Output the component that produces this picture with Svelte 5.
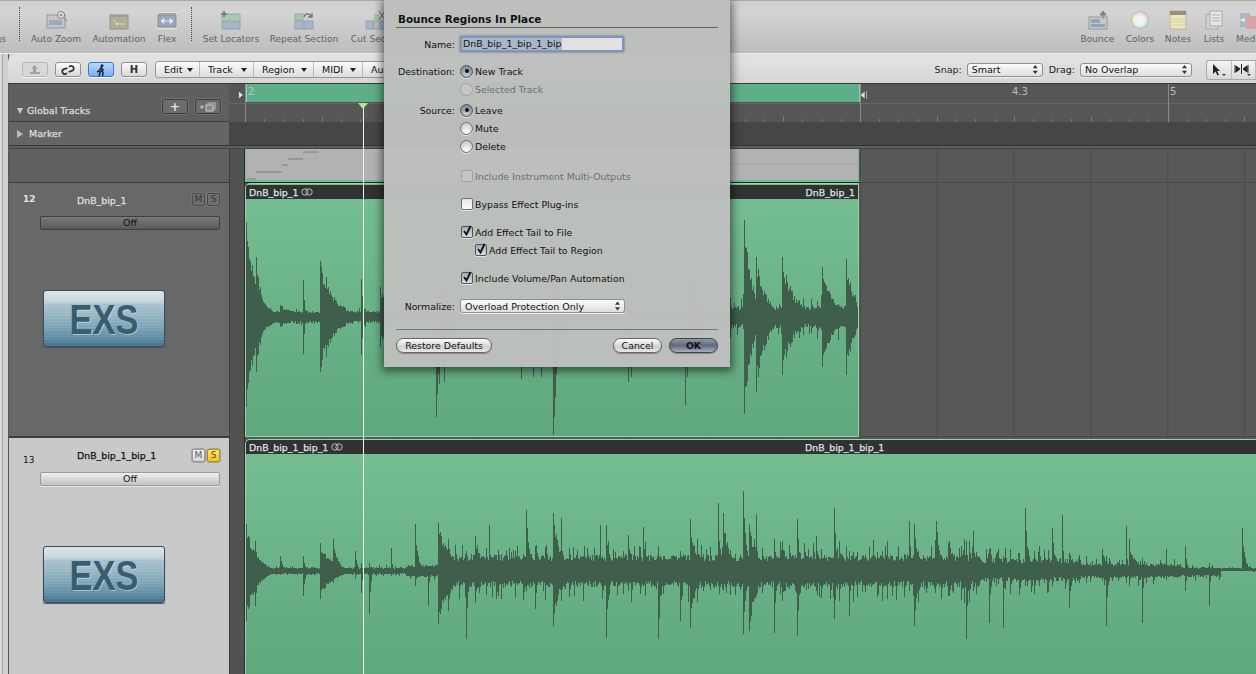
<script>
  function rng(seed) {
    let a = seed;
    return () => {
      a = (a + 0x6d2b79f5) | 0;
      let t = Math.imul(a ^ (a >>> 15), 1 | a);
      t = (t + Math.imul(t ^ (t >>> 7), 61 | t)) ^ t;
      return ((t ^ (t >>> 14)) >>> 0) / 4294967296;
    };
  }
  function wave(hits, base, from, to, cy, seed) {
    const r = rng(seed);
    let d = '';
    for (let x = from; x < to; x++) {
      const [bu, bd] = base(x);
      let u = bu * (0.75 + 0.5 * r());
      let l = bd * (0.75 + 0.5 * r());
      if (r() < 0.08) u *= 1.6;
      if (r() < 0.08) l *= 1.6;
      for (const h of hits) {
        const hx = Math.floor(h[0]);
        if (x >= hx && x - hx < h[3] * 7) {
          const k = Math.exp(-(x - hx) / h[3]);
          const j = x === hx ? 1 : 0.7 + 0.3 * r();
          u = Math.max(u, h[1] * k * j);
          l = Math.max(l, h[2] * k * j);
        }
      }
      d += `M${x - from + 0.5} ${(cy - u).toFixed(0)}V${(cy + l).toFixed(0)}`;
    }
    return d;
  }
  const z = (off, list, s = 3) => list.map((h) => [off + h[0] / s, h[1], h[2], h[3]]);
  function bursts(from, to, amp, seed) {
    const r = rng(seed);
    const out = [];
    for (let x = from; x < to; x += 3 + r() * 7) {
      const a = amp(x);
      out.push([x, a * (0.45 + r() * 0.75), a * (0.45 + r() * 0.75), 1.5 + r() * 2.5]);
    }
    return out;
  }

  const hits1 = z(240, [
    [15,95,90,10],[42,60,55,6],[60,8,10,30],[100,12,10,20],[158,37,37,1.5],[200,56,55,14],[215,40,40,10],
    [303,38,38,2],[350,30,30,8],[490,70,100,8],[510,45,65,5],[700,20,62,1.5],[730,20,60,1.5],[750,20,60,1.5],
    [780,90,118,6],[968,50,65,2],[975,40,60,1.5],[1110,60,88,2],[1115,60,60,10],[1255,97,97,8],[1285,60,75,10],
    [1350,60,58,12],[1450,50,50,12],[1510,58,58,8]
  ], 2.489).concat(bursts(730, 858, () => 20, 5));
  const hits2 = z(240, [
    [20,47,50,10],[45,30,35,3],[120,15,4,3],[190,15,25,2],[240,28,28,12],[280,32,12,5],[345,20,8,2],[365,8,22,1.5],
    [388,8,43,1.5],[455,23,5,1],[525,47,15,3],[565,5,35,1],[595,48,53,12],[625,32,40,6],[680,20,68,2],[705,35,32,6],
    [748,46,8,1],[770,8,28,2],[860,61,20,4],[885,25,38,2],[940,58,55,8],[965,53,30,1.5],[1030,10,30,1],[1080,46,10,1],
    [1100,46,67,3],[1165,36,20,3],[1210,44,15,2],[1255,10,68,3],[1320,20,50,1.5],[1350,52,57,7],[1435,68,15,1.5],
    [1450,58,20,6],[1510,80,63,3]
  ]).concat(z(746, [
    [10,47,60,8],[30,57,20,1],[85,30,62,2],[155,52,65,3],[110,30,30,5],[210,35,20,2],[265,63,48,2],[280,30,30,4],
    [310,20,45,2],[370,24,15,2],[410,20,30,1],[490,50,20,2],[505,47,55,5],[570,50,15,4],[610,30,25,6],[660,30,68,2],
    [683,40,20,2],[730,22,52,1],[772,15,57,1],[838,63,15,3],[880,25,15,2],[905,10,22,3],[918,43,10,3],[948,56,10,1],
    [970,10,37,1],[1070,22,10,6],[1080,15,55,2],[1140,45,12,1],[1150,32,12,6],[1190,8,52,1],[1260,22,4,1],[1318,25,20,2],
    [1390,8,35,1],[1490,43,0.4,3]
  ])).concat(bursts(455, 1170, (x) => (x < 980 ? 27 : x < 1080 ? 20 : 13), 17));
  const base1 = (x) => (x < 720 ? [5, 5] : [9, 9]);
  const base2 = (x) => {
    if (x > 1220) return [3, 0.4];
    if (x > 1180) return [3, 5];
    if (x > 1079) return [6, 6];
    if (x > 979) return [10, 8];
    if (x > 450) return [13, 13];
    if (x > 405) return [5, 5];
    return [3, 3];
  };
  const wave1 = wave(hits1, base1, 246, 858, 118, 11);
  const wave2raw = wave(hits2, base2, 246, 1256, 117, 29);

  const ticks = Array.from({ length: 54 }, (_, i) => 19.22 * i);

  const left = [
    { label: 'Auto Zoom', w: 60, icon: 'zoom' },
    { label: 'Automation', w: 66, icon: 'auto' },
    { label: 'Flex', w: 30, icon: 'flex' }
  ];
  const mid = [
    { label: 'Set Locators', w: 60, icon: 'loc' },
    { label: 'Repeat Section', w: 86, icon: 'rep' },
    { label: 'Cut Section', w: 60, icon: 'cut' }
  ];
  const right = [
    { label: 'Bounce', w: 39, icon: 'bounce' },
    { label: 'Colors', w: 46, icon: 'colors' },
    { label: 'Notes', w: 30, icon: 'notes' },
    { label: 'Lists', w: 42, icon: 'lists' }
  ];
  const menus = [
    { t: 'Edit', w: 44 }, { t: 'Track', w: 54 }, { t: 'Region', w: 60 }, { t: 'MIDI', w: 49 }, { t: 'Audio', w: 55 }
  ];
</script>

{#snippet icon(name)}
  <svg class="ticon" viewBox="0 0 24 20" width="24" height="20">
    {#if name === 'zoom'}
      <rect x="3" y="5" width="18" height="13" fill="#c4c4c4" stroke="#8c8c8c"/>
      <rect x="5" y="10" width="13" height="5" fill="#8ba2bb"/>
      <circle cx="17" cy="5" r="3.6" fill="#e6e6e6" stroke="#707070"/>
      <path d="M15.5 5h3M17 3.5v3M20 8l3 3" stroke="#666" fill="none"/>
    {:else if name === 'auto'}
      <rect x="3" y="5" width="18" height="14" fill="#a9a78e" stroke="#85857a"/>
      <rect x="3" y="5" width="18" height="2" fill="#8d8d80"/>
      <path d="M6 10l4 4h8" stroke="#e6e060" fill="none"/>
      <circle cx="10" cy="14" r="1.3" fill="#ece870"/>
    {:else if name === 'flex'}
      <rect x="1" y="1" width="22" height="19" rx="2" fill="#e3e3e3" stroke="#c8c8c8"/>
      <rect x="3" y="5" width="18" height="12" fill="#8aa0b8" stroke="#777"/>
      <rect x="3" y="3" width="18" height="2" fill="#9b9b9b"/>
      <path d="M6 11h12M6 11l3-2.5v5zM18 11l-3-2.5v5z" fill="#eef" stroke="#eef" stroke-width=".8"/>
    {:else if name === 'loc'}
      <rect x="3" y="4" width="18" height="7" fill="#9dc8a8" stroke="#84a68d"/>
      <rect x="3" y="12" width="18" height="7" fill="#9cb3c8" stroke="#8399ad"/>
      <path d="M5 1v6M2 4h6" stroke="#557" stroke-width="1.6"/>
    {:else if name === 'rep'}
      <rect x="3" y="11" width="8" height="8" fill="#9db3c8" stroke="#8399ad"/>
      <rect x="12" y="11" width="9" height="8" fill="#9db3c8" stroke="#8399ad"/>
      <rect x="3" y="4" width="8" height="6" fill="#9dc8a8" stroke="#84a68d"/>
      <path d="M12 7c1-4 5-4 7-1M20 3v4h-4" stroke="#555" stroke-width="1.3" fill="none"/>
    {:else if name === 'cut'}
      <rect x="1" y="11" width="7" height="8" fill="#9db3c8" stroke="#8399ad"/>
      <rect x="9" y="11" width="6" height="8" fill="#bbb" stroke="#999"/>
      <rect x="16" y="11" width="7" height="8" fill="#9db3c8" stroke="#8399ad"/>
      <rect x="9" y="4" width="6" height="6" fill="#9dc8a8"/>
      <path d="M14 1l6 9M20 1l-6 9" stroke="#555" fill="none"/>
    {:else if name === 'bounce'}
      <rect x="3" y="7" width="18" height="12" fill="#c9c9c9" stroke="#8a8a8a"/>
      <rect x="5" y="9" width="9" height="4" fill="#7f9cb8"/>
      <rect x="5" y="14" width="14" height="3" fill="#7f9cb8"/>
      <path d="M17 9V3M14 5l3-4 3 4z" fill="#5f6f7f" stroke="#5f6f7f"/>
    {:else if name === 'notes'}
      <rect x="4" y="1" width="16" height="18" fill="#f3edb9" stroke="#b8b08a"/>
      <rect x="4" y="1" width="16" height="4" fill="#8f7d6c"/>
      <path d="M4 9h16M4 12h16M4 15h16" stroke="#d8d094"/>
    {:else if name === 'lists'}
      <rect x="4" y="4" width="12" height="15" fill="#d4d4d4" stroke="#a0a0a0"/>
      <rect x="8" y="1" width="12" height="15" fill="#ececec" stroke="#a0a0a0"/>
      <path d="M10 5h8M10 8h8M10 11h8" stroke="#a8a8a8"/>
    {/if}
  </svg>
{/snippet}

{#snippet tool(t)}
  <div class="titem" style="width:{t.w}px">
    {#if t.icon === 'colors'}
      <div class="wheel"></div>
    {:else}
      {@render icon(t.icon)}
    {/if}
    <span class="tlabel">{t.label}</span>
  </div>
{/snippet}

{#snippet loop()}
  <svg class="loop" viewBox="0 0 12 8" width="12" height="8"><circle cx="4" cy="4" r="3.2" fill="none" stroke="#bbb"/><circle cx="8" cy="4" r="3.2" fill="none" stroke="#bbb"/></svg>
{/snippet}

{#snippet check()}
  <svg viewBox="0 0 12 12" width="12" height="12"><path d="M3 6l2.500 3.500L9.500 1" fill="none" stroke="#111" stroke-width="1.800"/></svg>
{/snippet}

{#snippet trackHead(cls, num, name)}
  <div class="thead {cls}">
    <div class="ttop">
      <span class="num">{num}</span>
      <span class="tname">{name}</span>
      <span class="ms">M</span>
      <span class="ms solo">S</span>
    </div>
    <div class="off">Off</div>
    <div class="exs"><span>EXS</span></div>
  </div>
{/snippet}

<div class="app">
  <header class="toolbar">
    <div class="gs"><span class="tlabel">Settings</span></div>
    <div class="sep first"></div>
    {#each left as t}{@render tool(t)}{/each}
    <div class="sep second"></div>
    {#each mid as t}{@render tool(t)}{/each}
    <div class="rightgroup">
      {#each right as t}{@render tool(t)}{/each}
      <div class="titem media">
        <svg class="ticon" viewBox="0 0 16 20" width="16" height="20">
          <rect x="0" y="3" width="10" height="14" fill="#9db3c8"/>
          <rect x="6" y="6" width="10" height="13" fill="#d89aa0"/>
          <path d="M0 10h5M5 10l-2-2v4z" stroke="#eee" fill="#eee"/>
        </svg>
        <span class="tlabel">Media</span>
      </div>
    </div>
  </header>

  <div class="body">
    <div class="strip"></div>
    <div class="panel">
      <div class="subbar">
        <div class="btn back">
          <svg viewBox="0 0 14 10" width="14" height="10"><path d="M2 9h10V7H8V4h2L6.5 0 3 4h2v3H2z" fill="#a2a2a2"/></svg>
        </div>
        <div class="btn link">
          <svg viewBox="0 0 14 10" width="14" height="10"><path d="M5 8H3.500A2.500 2.500 0 0 1 3.500 3H7M9 2h1.500A2.500 2.500 0 0 1 10.500 7H7" fill="none" stroke="#333" stroke-width="1.800" transform="rotate(-18 7 5)"/></svg>
        </div>
        <div class="btn run">
          <svg viewBox="0 0 12 12" width="12" height="12"><circle cx="7" cy="1.800" r="1.500" fill="#123"/><path d="M6 3.500L4 7l-2 1M6 3.500l2.500 3M6 6l2 2.500L7.500 12M5.500 7L4 12" stroke="#123" stroke-width="1.500" fill="none"/></svg>
        </div>
        <div class="btn hbtn">H</div>
        <div class="menus">
          {#each menus as m}
            <div class="menu" style="width:{m.w}px"><span>{m.t}</span><i></i></div>
          {/each}
        </div>
        <div class="subright">
          <span class="slabel">Snap:</span>
          <div class="sel snap"><span>Smart</span><b></b></div>
          <span class="slabel drag">Drag:</span>
          <div class="sel dragsel"><span>No Overlap</span><b></b></div>
          <div class="tools">
            <div class="toolcell">
              <svg viewBox="0 0 16 14" width="16" height="14"><path d="M2 1l0 10 2.500-2.500 2 4 1.500-.8-2-3.800H9z" fill="#222"/><path d="M11 11h4l-2 2z" fill="#333"/></svg>
            </div>
            <div class="toolcell">
              <svg viewBox="0 0 18 14" width="18" height="14"><path d="M7.500 1v10M1 2v8M6 6L2 3v6zM9 6l4-3v6zM14 2v8" fill="#222" stroke="#222"/><path d="M13 11h4l-2 2z" fill="#333"/></svg>
            </div>
          </div>
        </div>
      </div>

      <div class="row global">
        <div class="ghead">
          <i class="tri down"></i><span class="gt">Global Tracks</span>
          <div class="gbtn plus">+</div>
          <div class="gbtn plus2">
            <svg viewBox="0 0 18 10" width="18" height="10"><path d="M1 5h4M3 3v4" stroke="#ccc"/><rect x="9" y="1" width="7" height="6" fill="none" stroke="#bbb"/><rect x="7" y="3" width="7" height="6" fill="#888" stroke="#ccc"/></svg>
          </div>
        </div>
        <svg class="ruler" viewBox="0 0 1027 38" width="1027" height="38">
          <rect x="0" y="19" width="1027" height="1" fill="#666"/>
          <rect x="16" y="0" width="615" height="18" fill="#5fae8a"/>
          <rect x="16" y="0" width="2" height="18" fill="#8ecfae"/>
          <rect x="630" y="0" width="1" height="18" fill="#8ecfae"/>
          <path d="M9.500 7v8l5-4z" fill="#cdeadb" stroke="#234" stroke-width=".5"/>
          <path d="M636 7v8l-5-4z" fill="#cdeadb" stroke="#234" stroke-width=".5"/>
          <path d="M637.500 7v8" stroke="#aaa"/>
          <text x="19" y="11" class="rnum light">2</text>
          <text x="783" y="11" class="rnum">4.3</text>
          <text x="941" y="11" class="rnum">5</text>
          {#each ticks as t, i}
            <rect x={Math.round(16 + t)} y={i % 16 === 0 ? 0 : i % 4 === 0 ? 32 : 35} width="1" height={i % 16 === 0 ? 38 : i % 4 === 0 ? 6 : 3} fill={i % 16 === 0 ? '#8a8a8a' : '#7c7c7c'}/>
          {/each}
        </svg>
      </div>

      <div class="row marker">
        <div class="mhead"><i class="tri"></i><span class="gt">Marker</span></div>
        <div class="mlane"></div>
      </div>
      <div class="divider"></div>

      <div class="row stub">
        <div class="shead"></div>
        <div class="gutter"></div>
        <div class="lane">
          <div class="midi">
            <svg viewBox="0 0 612 31" width="612" height="31">
              <path d="M57 3h15M42 10h15M36 16h6M10 23h26M1 30h9" stroke="#8f8f8f" stroke-width="1.500"/>
              <path d="M612 15H480" stroke="#a5a5a5"/>
            </svg>
          </div>
        </div>
      </div>

      <div class="row t12">
        {@render trackHead('dark', '12', 'DnB_bip_1')}
        <div class="gutter"></div>
        <div class="lane">
          <div class="region r12">
            <div class="rtitle"><span>DnB_bip_1</span>{@render loop()}<em>DnB_bip_1</em></div>
            <svg class="wave" viewBox="0 0 612 237" width="612" height="237" shape-rendering="crispEdges"><path d={wave1} stroke="#3f5f4c" fill="none"/></svg>
          </div>
        </div>
      </div>

      <div class="row t13">
        {@render trackHead('lite', '13', 'DnB_bip_1_bip_1')}
        <div class="gutter"></div>
        <div class="lane">
          <div class="region r13">
            <div class="rtitle"><span>DnB_bip_1_bip_1</span>{@render loop()}<em class="ctr">DnB_bip_1_bip_1</em></div>
            <svg class="wave" viewBox="0 0 1010 219" width="1010" height="219" shape-rendering="crispEdges"><path d={wave2raw} stroke="#3f5f4c" fill="none"/></svg>
          </div>
        </div>
      </div>
    </div>
  </div>

  <div class="playhead"><i></i></div>

  <div class="dialog">
    <div class="dtitle">Bounce Regions In Place</div>
    <div class="f name"><label for="bn">Name:</label><div id="bn" class="input"><span>DnB_bip_1_bip_1_bip</span></div></div>
    <div class="f m9"><label for="d1">Destination:</label><span class="radio on" id="d1"></span><span class="lb">New Track</span></div>
    <div class="f"><span class="lab"></span><span class="radio dis"></span><span class="lb dim">Selected Track</span></div>
    <div class="f m3"><label for="s1">Source:</label><span class="radio on" id="s1"></span><span class="lb">Leave</span></div>
    <div class="f"><span class="lab"></span><span class="radio"></span><span class="lb">Mute</span></div>
    <div class="f"><span class="lab"></span><span class="radio"></span><span class="lb">Delete</span></div>
    <div class="f m12"><span class="lab"></span><span class="check dis"></span><span class="lb dim">Include Instrument Multi-Outputs</span></div>
    <div class="f m10"><span class="lab"></span><span class="check"></span><span class="lb">Bypass Effect Plug-ins</span></div>
    <div class="f m10"><span class="lab"></span><span class="check on">{@render check()}</span><span class="lb">Add Effect Tail to File</span></div>
    <div class="f nested"><span class="lab"></span><span class="check on">{@render check()}</span><span class="lb">Add Effect Tail to Region</span></div>
    <div class="f m10"><span class="lab"></span><span class="check on">{@render check()}</span><span class="lb">Include Volume/Pan Automation</span></div>
    <div class="f m10"><label for="nz">Normalize:</label><div class="sel norm" id="nz"><span>Overload Protection Only</span><b></b></div></div>
    <div class="dfoot">
      <div class="pill restore">Restore Defaults</div>
      <div class="pill cancel">Cancel</div>
      <div class="pill ok">OK</div>
    </div>
  </div>
</div>

<style>
  :global(body) { margin: 0; background: #c8c8c8; overflow: hidden; }
  .app { position: relative; width: 1256px; height: 674px; overflow: hidden; font-family: "DejaVu Sans", sans-serif; font-size: 9.5px; color: #111; display: flex; flex-direction: column; }

  .toolbar { height: 54px; box-sizing: border-box; display: flex; align-items: flex-start; background: linear-gradient(180deg, #cfcfcf 0, #d4d4d4 20%, #bdbdbd 100%); border-top: 1px solid #aaa; border-bottom: 1px solid #ececec; flex: none; overflow: hidden; }
  .gs { width: 6px; height: 52px; display: flex; justify-content: flex-end; align-items: flex-end; overflow: hidden; padding-bottom: 8px; box-sizing: border-box; white-space: nowrap; }
  .gs .tlabel { flex: none; }
  .sep { width: 0; height: 34px; margin-top: 6px; border-left: 1px dotted #444; flex: none; }
  .sep.first { margin-left: 13px; margin-right: 6px; }
  .sep.second { margin-left: 9px; margin-right: 9px; }
  .titem { display: flex; flex-direction: column; align-items: center; flex: none; height: 52px; box-sizing: border-box; padding-top: 9px; overflow: visible; white-space: nowrap; }
  .ticon { display: block; flex: none; height: 20px; opacity: .8; }
  .wheel { width: 18px; height: 18px; margin: 1px 0; border-radius: 50%; background: radial-gradient(circle, #f4f4f4 0 30%, transparent 75%), conic-gradient(#e8b6c8, #d8b8e8, #a8c8e8, #a8e8d0, #d0e8a8, #f0e0a8, #e8b6c8); box-shadow: inset 0 0 0 1px #b4b4b4; }
  .tlabel { color: #626262; font-size: 9.1px; margin-top: 3px; line-height: 12px; letter-spacing: 0; }
  .rightgroup { margin-left: auto; display: flex; flex: none; width: 178px; }
  .media { width: 21px; overflow: hidden; align-items: flex-start; padding-left: 1px; }
  .media svg { margin-left: 4px; }

  .body { flex: 1; display: flex; min-height: 0; }
  .strip { width: 9px; flex: none; background: linear-gradient(90deg, #d8d8d8 0 2px, #a8a8a8 2px 3px, #cfcfcf 3px 8px, #555 8px); }
  .panel { flex: 1; min-width: 0; display: flex; flex-direction: column; }

  .subbar { height: 30px; box-sizing: border-box; flex: none; display: flex; align-items: center; background: linear-gradient(180deg, #e3e3e3, #d6d6d6); border-top-left-radius: 8px; margin-left: -1px; padding: 2px 0 0 14px; border-bottom: 1px solid #3a3a3a; }
  .btn { width: 24px; height: 13px; border: 1px solid #8f8f8f; border-radius: 3px; background: linear-gradient(180deg, #fafafa, #d8d8d8); display: flex; align-items: center; justify-content: center; flex: none; margin-right: 7px; box-shadow: 0 1px 0 #f4f4f4; }
  .back { border-color: #b5b5b5; background: #d8d8d8; }
  .run { border-color: #3b78d8; background: linear-gradient(180deg, #bcd8f8, #7cb0f0); }
  .hbtn { font-weight: bold; font-size: 10px; color: #333; }
  .menus { display: flex; height: 15px; margin-left: 1px; border: 1px solid #999; border-radius: 3px; background: linear-gradient(180deg, #fbfbfb, #dcdcdc); flex: none; width: 245px; overflow: hidden; }
  .menu { display: flex; align-items: center; justify-content: space-between; box-sizing: border-box; padding: 0 6px 0 8px; border-right: 1px solid #bbb; flex: none; color: #111; font-size: 9.5px; }
  .menu i { border-left: 3px solid transparent; border-right: 3px solid transparent; border-top: 4px solid #222; }
  .subright { margin-left: auto; display: flex; align-items: center; flex: none; }
  .slabel { color: #222; font-size: 9.5px; margin-right: 5px; }
  .slabel.drag { margin-left: 6px; }
  .sel { height: 14px; box-sizing: border-box; border: 1px solid #909090; border-radius: 3px; background: linear-gradient(180deg, #fbfbfb, #dedede); display: flex; align-items: center; padding: 0 4px; position: relative; font-size: 9.5px; box-shadow: 0 1px 0 #eee; }
  .sel b { margin-left: auto; width: 5px; height: 9px; background: #333; clip-path: polygon(50% 0, 100% 35%, 0 35%, 50% 0, 0 65%, 100% 65%, 50% 100%, 0 65%); }
  .snap { width: 76px; }
  .dragsel { width: 112px; }
  .tools { display: flex; margin-left: 14px; width: 50px; height: 20px; border: 1px solid #aaa; border-right: 0; border-radius: 3px 0 0 3px; background: linear-gradient(180deg, #f4f4f4, #d8d8d8); box-sizing: border-box; }
  .toolcell { flex: 1; display: flex; align-items: center; justify-content: center; border-right: 1px solid #bbb; }

  .row { display: grid; grid-template-columns: 220px 16px 1fr; flex: none; }
  .global { display: flex; height: 38px; background: #565656; overflow: hidden; }
  .ghead { width: 220px; height: 38px; box-sizing: border-box; flex: none; background: #5f5f5f; display: flex; align-items: center; padding: 16px 0 0 8px; border-bottom: 1px solid #3c3c3c; }
  .gt { color: #dedede; font-size: 9.5px; font-weight: normal; -webkit-text-stroke: .25px #dedede; white-space: nowrap; }
  .tri { width: 0; height: 0; border-top: 4px solid transparent; border-bottom: 4px solid transparent; border-left: 6px solid #bbb; margin-right: 6px; }
  .tri.down { border: 0; border-left: 3.5px solid transparent; border-right: 3.5px solid transparent; border-top: 6px solid #ccc; margin-right: 4px; }
  .gbtn { width: 24px; height: 13px; border: 1px solid #3c3c3c; border-radius: 2px; background: #6c6c6c; color: #ddd; display: flex; align-items: center; justify-content: center; font-size: 13px; font-weight: bold; margin-top: -8px; box-shadow: 0 0 0 1px #707070; }
  .plus { margin-left: auto; }
  .plus2 { margin-left: 7px; margin-right: 8px; }
  .ruler { display: block; flex: none; }
  .rnum { font-family: "DejaVu Sans", sans-serif; font-size: 10px; fill: #bbb; }
  .rnum.light { fill: #9ed4ba; }

  .marker { display: flex; height: 23px; }
  .mhead { width: 220px; flex: none; background: #656565; box-sizing: border-box; display: flex; align-items: center; padding-left: 8px; }
  .mlane { flex: 1; background: #464646; }
  .divider { flex: none; height: 4px; background: #5e5e5e; border-top: 1px solid #333; border-bottom: 1px solid #444; box-sizing: border-box; }

  .stub { height: 34px; }
  .shead { background: #606060; border-bottom: 1px solid #3c3c3c; }
  .gutter { background: #525252; border-left: 1px solid #3d3d3d; border-right: 1px solid #2c2c2c; }
  .lane { background-color: #585858; background-image: linear-gradient(90deg, #4b4b4b 1px, transparent 1px), linear-gradient(180deg, transparent calc(100% - 1px), #484848 1px); background-size: 76.87px 100%, 100% 100%; min-width: 0; overflow: hidden; }
  .midi { width: 612px; height: 31px; border: 1px solid #6fbf93; border-top: 0; border-bottom-width: 2px; background: #b2b2b2; box-shadow: 0 1px 0 #222; }
  .midi svg { display: block; }

  .t12 { height: 254px; }
  .t13 { flex: 1; min-height: 0; overflow: hidden; }
  .thead { box-sizing: border-box; padding-top: 10px; border-bottom: 1px solid #3c3c3c; }
  .thead.dark { background: #686868; color: #e0e0e0; }
  .thead.lite { background: #c9c9c9; color: #111; padding-top: 11px; border: 0; border-top: 1px solid #3c3c3c; }
  .ttop { display: flex; align-items: flex-start; padding-left: 14px; height: 13px; }
  .num { width: 28px; font-weight: bold; font-size: 9px; line-height: 11px; flex: none; }
  .dark .num { margin-top: 1px; }
  .lite .num { margin-top: 6px; font-weight: normal; }
  .tname { width: 100px; flex: none; margin: 0 15px 0 26px; font-size: 9.4px; line-height: 13px; -webkit-text-stroke: .25px currentColor; white-space: nowrap; }
  .dark .tname { margin-top: 1px; }
  .ms { width: 11px; height: 11px; border: 1px solid #484848; border-radius: 2px; margin-right: 2px; font-size: 9px; line-height: 11px; text-align: center; background: #707070; color: #333; box-shadow: 0 0 0 .5px #808080; flex: none; font-weight: normal; }
  .lite .ms { background: linear-gradient(180deg, #f5f5f5, #d5d5d5); border-color: #999; color: #555; }
  .lite .solo { background: linear-gradient(180deg, #ffe95e, #f3c72a); border-color: #a88f2d; color: #5b4a00; }
  .off { margin: 10px 9px 0 31px; height: 12px; border: 1px solid #3e3e3e; border-radius: 2px; background: linear-gradient(180deg, #7a7a7a, #5a5a5a); color: #111; text-align: center; font-size: 9.5px; line-height: 12px; }
  .lite .off { border-color: #9a9a9a; background: linear-gradient(180deg, #efefef, #c2c2c2); box-shadow: 0 1px 0 #e8e8e8; }
  .exs { margin: 60px 0 0 34px; width: 120px; height: 55px; border: 1px solid #3c4c58; border-radius: 3px; background: repeating-linear-gradient(180deg, rgba(255,255,255,.07) 0 1px, transparent 1px 3px), linear-gradient(180deg, #dbe6ea 0, #c4d5dc 20%, #a9c2cd 24%, #9ab9c7 40%, #7ea5b8 65%, #5f8ca6 85%, #3f6f8b 100%); display: flex; align-items: center; justify-content: center; overflow: hidden; box-shadow: 0 1px 1px #555; }
  .exs span { font-family: "Liberation Sans", sans-serif; font-weight: bold; font-size: 43px; line-height: 50px; color: #3a5d6e; transform: scaleX(.8); text-shadow: 1px 1px 0 rgba(230,240,245,.55); display: inline-block; }

  .region { background: linear-gradient(180deg, #76bf92, #5fa77d); display: flex; flex-direction: column; box-sizing: border-box; overflow: hidden; position: relative; }
  .r12 { width: 614px; height: 254px; border: 1px solid #93d6ac; border-top-left-radius: 5px; padding-top: 1px; }
  .r13 { height: 235px; border-top: 1px solid #93d6ac; margin-top: 2px; border-left: 1px solid #93d6ac; border-top-left-radius: 5px; }
  .rtitle { height: 14px; flex: none; background: #323232; color: #dce4e8; display: flex; align-items: center; font-size: 9.4px; -webkit-text-stroke: .25px #dce4e8; padding: 0 3px; position: relative; white-space: nowrap; }
  .loop { margin-left: 3px; flex: none; }
  .rtitle em { font-style: normal; margin-left: auto; }
  .rtitle em.ctr { position: absolute; left: 559px; }
  .wave { display: block; flex: none; }

  .playhead { position: absolute; left: 363px; top: 103px; bottom: 0; width: 1px; background: #f2f2f2; }
  .playhead i { position: absolute; left: -5px; top: 0; border-left: 5.500px solid transparent; border-right: 5.500px solid transparent; border-top: 6px solid #b5e68a; }

  .dialog { position: absolute; left: 384px; top: 0; width: 346px; height: 367px; box-sizing: border-box; padding: 12px 12px 0; background: rgba(189, 191, 189, .98); box-shadow: 0 2px 9px 2px rgba(0, 0, 0, .55); color: #111; }
  .dtitle { height: 15px; line-height: 14px; border-bottom: 1px solid #666; font-size: 10.4px; font-weight: 600; padding-left: 2px; margin-bottom: 7px; }
  .f { display: flex; align-items: center; height: 18px; font-size: 9.4px; }
  .f label, .lab { width: 59px; flex: none; text-align: right; margin-right: 5px; white-space: nowrap; }
  .m10 { margin-top: 10px; }
  .m9 { margin-top: 9px; }
  .m3 { margin-top: 3px; }
  .m12 { margin-top: 12px; }
  .lb { margin-left: 2px; white-space: nowrap; }
  .dim { color: #6e6e6e; }
  .input { width: 160px; height: 12px; background: #e2e2e2; border: 2px solid #7b98b8; box-shadow: 0 0 2px #567; line-height: 12px; }
  .input span { background: #a9b6c7; display: inline-block; padding: 0 1px; }
  .radio { width: 11px; height: 11px; border-radius: 50%; border: 1px solid #707070; background: radial-gradient(circle at 50% 80%, #fff, #cfcfcf 70%); flex: none; display: flex; align-items: center; justify-content: center; box-shadow: 0 1px 0 #e6e6e6; }
  .radio.on { background: radial-gradient(circle at 50% 80%, #c5ccd8, #7f8a9c 80%); border-color: #555; }
  .radio.on::after { content: ""; width: 4px; height: 4px; border-radius: 50%; background: #111; }
  .radio.dis { background: #c6c8c6; border-color: #a0a0a0; box-shadow: none; }
  .check { width: 10px; height: 10px; border: 1px solid #707070; border-radius: 2px; margin-left: 1px; background: linear-gradient(180deg, #e6e6e6, #fafafa); flex: none; position: relative; box-shadow: 0 1px 0 #e4e4e4; }
  .check.on { background: linear-gradient(180deg, #a2abb9, #d8dce4); border-color: #555; }
  .check.on svg { position: absolute; left: -1px; top: -2px; }
  .check.dis { background: #c4c6c4; border-color: #a0a0a0; box-shadow: none; }
  .nested { padding-left: 14px; }
  .norm { width: 165px; flex: none; }
  .dfoot { margin-top: 14px; border-top: 1px solid #777; padding-top: 8px; display: flex; align-items: flex-start; }
  .pill { height: 13px; line-height: 13px; border: 1px solid #666; border-radius: 8px; background: linear-gradient(180deg, #fdfdfd, #d0d0d0 60%, #e8e8e8); text-align: center; font-size: 9.4px; box-shadow: 0 1px 1px #888; box-sizing: content-box; }
  .restore { width: 94px; }
  .cancel { width: 47px; margin-left: auto; }
  .ok { width: 47px; margin-left: 7px; background: linear-gradient(180deg, #8d98a8, #5f6b7e 50%, #a7b0be); border-color: #444; font-weight: bold; }
</style>
